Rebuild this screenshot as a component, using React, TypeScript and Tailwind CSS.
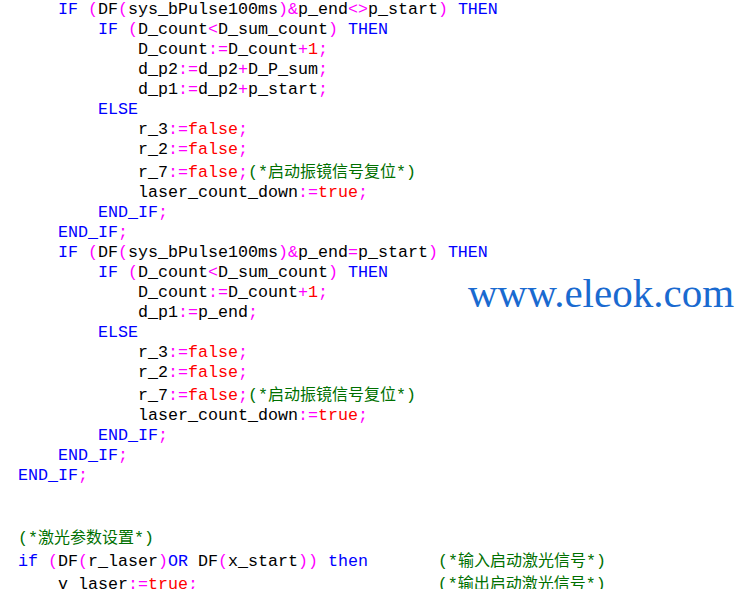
const code: string[] = [
  "    IF (DF(sys_bPulse100ms)&p_end<>p_start) THEN",
  "        IF (D_count<D_sum_count) THEN",
  "            D_count:=D_count+1;",
  "            d_p2:=d_p2+D_P_sum;",
  "            d_p1:=d_p2+p_start;",
  "        ELSE",
  "            r_3:=false;",
  "            r_2:=false;",
  "            r_7:=false;(*启动振镜信号复位*)",
  "            laser_count_down:=true;",
  "        END_IF;",
  "    END_IF;",
  "    IF (DF(sys_bPulse100ms)&p_end=p_start) THEN",
  "        IF (D_count<D_sum_count) THEN",
  "            D_count:=D_count+1;",
  "            d_p1:=p_end;",
  "        ELSE",
  "            r_3:=false;",
  "            r_2:=false;",
  "            r_7:=false;(*启动振镜信号复位*)",
  "            laser_count_down:=true;",
  "        END_IF;",
  "    END_IF;",
  "END_IF;",
  "",
  "",
  "(*激光参数设置*)",
  "if (DF(r_laser)OR DF(x_start)) then       (*输入启动激光信号*)",
  "    v_laser:=true;                        (*输出启动激光信号*)",
];

const keywords = new Set(["IF", "THEN", "ELSE", "END_IF", "if", "then", "OR"]);
const literals = new Set(["true", "false"]);

const hasZh = (s: string) => /[\u4e00-\u9fff]/.test(s);

// comment text: ascii in mono, chinese in a CJK face at 16px
const Comment = ({ text }: { text: string }) => {
  const parts = text.split(/([\u4e00-\u9fff]+)/).filter((p) => p !== "");
  return (
    <span className="text-[#007000]">
      {parts.map((p, i) =>
        hasZh(p) ? (
          <span
            key={i}
            className="font-['Noto_Sans_CJK_SC',sans-serif] text-[16px] leading-[14px]"
          >
            {p}
          </span>
        ) : (
          <span key={i}>{p}</span>
        )
      )}
    </span>
  );
};

const Line = ({ text }: { text: string }) => {
  const re = /(\(\*.*?\*\))|([A-Za-z_][A-Za-z0-9_]*)|(\d+)|(\s+)|(.)/g;
  const toks: JSX.Element[] = [];
  let m: RegExpExecArray | null;
  let k = 0;
  while ((m = re.exec(text)) !== null) {
    const [t, comment, word, num, space] = m;
    if (comment) {
      toks.push(<Comment key={k++} text={comment} />);
    } else if (word) {
      let cls = "text-black";
      if (keywords.has(word)) cls = "text-[#0000ff]";
      else if (literals.has(word)) cls = "text-[#ff0000]";
      toks.push(
        <span key={k++} className={cls}>
          {word}
        </span>
      );
    } else if (num) {
      toks.push(
        <span key={k++} className="text-[#ff0000]">
          {num}
        </span>
      );
    } else if (space) {
      toks.push(<span key={k++}>{space}</span>);
    } else {
      toks.push(
        <span key={k++} className="text-[#ff00ff]">
          {t}
        </span>
      );
    }
  }
  return (
    <div
      className={
        hasZh(text)
          ? "h-[23px] pt-[3px] leading-[20px] whitespace-pre"
          : "h-[20px] leading-[20px] whitespace-pre"
      }
    >
      {toks}
    </div>
  );
};

export default function App() {
  return (
    <div className="relative w-[735px] h-[589px] overflow-hidden bg-white">
      <div className="pl-[18px] font-['Liberation_Mono',monospace] text-[16.67px]">
        {code.map((l, i) => (
          <Line key={i} text={l} />
        ))}
      </div>
      <div className="absolute left-[468px] top-[273px] font-['Liberation_Serif',serif] text-[41px] leading-none text-[#1a6ad0]">
        www.eleok.com
      </div>
    </div>
  );
}
